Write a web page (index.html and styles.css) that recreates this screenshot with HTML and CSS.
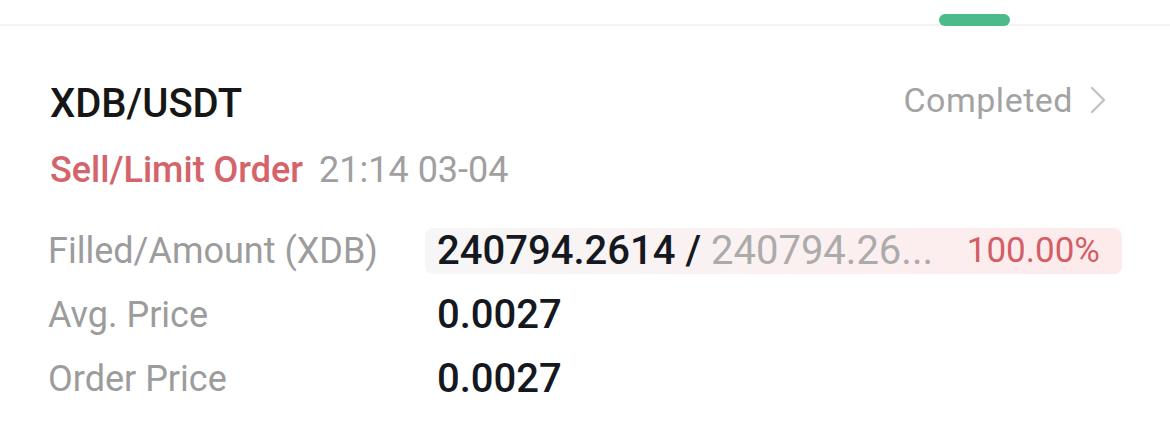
FILE: index.html
```html
<!DOCTYPE html>
<html>
<head>
<meta charset="utf-8">
<link rel="stylesheet" href="styles.css">
</head>
<body>
<div class="tabbar"><div class="indicator"></div></div>
<div class="card">
  <div class="header">
    <div class="title">XDB/USDT</div>
    <div class="status">Completed
      <svg class="chev" width="18" height="30" viewBox="0 0 18 30"><polyline points="3,3 15,15 3,27" fill="none" stroke="#c2c2c2" stroke-width="2.4" stroke-linecap="round" stroke-linejoin="round"/></svg>
    </div>
  </div>
  <div class="sub"><span class="side">Sell/Limit Order</span><span class="time">21:14 03-04</span></div>
  <div class="grid">
    <div class="label">Filled/Amount (XDB)</div>
    <div class="pill"><span class="val">240794.2614 / </span><span class="muted">240794.26...</span><span class="pct">100.00%</span></div>
    <div class="label">Avg. Price</div>
    <div class="val">0.0027</div>
    <div class="label">Order Price</div>
    <div class="val">0.0027</div>
  </div>
</div>
</body>
</html>
```
FILE: styles.css
```css
html, body {
  margin: 0;
  background: #ffffff;
  font-family: Roboto, "Noto Sans", sans-serif;
}
.tabbar {
  height: 24px;
  border-bottom: 2px solid #f3f3f3;
  display: flex;
  justify-content: flex-end;
  align-items: flex-end;
  padding-right: 160px;
}
.indicator {
  width: 71px;
  height: 12px;
  border-radius: 6px;
  background: #4dba8b;
  margin-bottom: -2px;
}
.card {
  padding: 0 48px 0 50px;
}
.header {
  margin-top: 54px;
  display: flex;
  justify-content: space-between;
  align-items: center;
  padding-right: 15px;
}
.title {
  font-size: 40px;
  line-height: 48px;
  font-weight: 500;
  color: #161616;
}
.status {
  display: flex;
  align-items: center;
  gap: 16px;
  font-size: 34px;
  line-height: 40px;
  letter-spacing: 0.5px;
  color: #a3a3a3;
  margin-top: -8px;
}
.sub {
  margin-top: 22px;
  font-size: 36px;
  line-height: 40px;
  display: flex;
  gap: 16px;
}
.side {
  color: #d4636a;
  font-weight: 500;
}
.time {
  color: #a0a0a0;
}
.grid {
  margin-top: 38px;
  margin-left: -2px;
  display: grid;
  grid-template-columns: 377px 1fr;
  row-gap: 18px;
  align-items: center;
}
.label {
  font-size: 36px;
  line-height: 46px;
  color: #9c9c9c;
}
.val {
  font-size: 40px;
  line-height: 46px;
  font-weight: 500;
  color: #141820;
  white-space: pre;
  padding-left: 12px;
}
.pill {
  display: flex;
  align-items: center;
  height: 46px;
  border-radius: 8px;
  background: linear-gradient(90deg, #f7f6f6 0%, #fbf1f1 50%, #fdeaeb 100%);
  padding-right: 22px;
}
.muted {
  font-size: 40px;
  line-height: 46px;
  color: #ababab;
}
.pct {
  margin-left: auto;
  font-size: 35px;
  line-height: 46px;
  color: #d35e65;
}
```
